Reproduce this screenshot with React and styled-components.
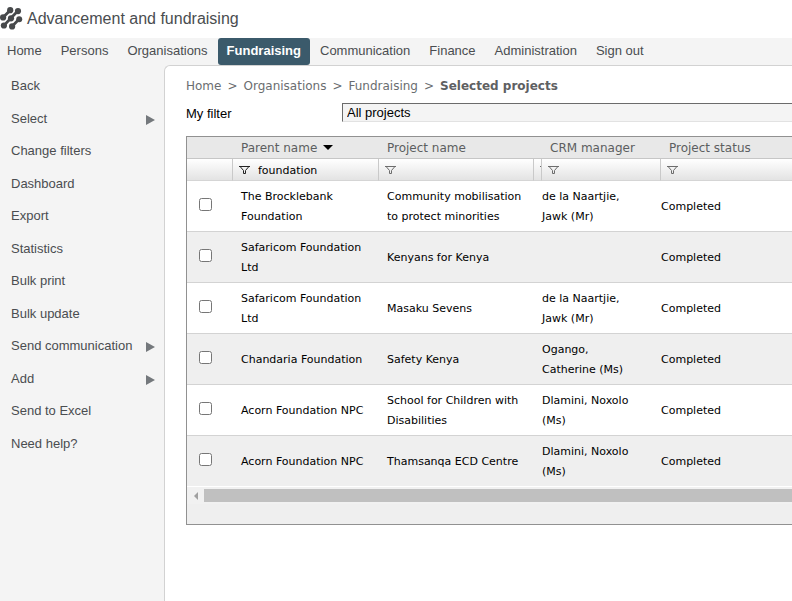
import React, { useState } from "react";
import styled, { createGlobalStyle } from "styled-components";

const arial = '"Liberation Sans", Arial, sans-serif';
const verdana = '"DejaVu Sans", Verdana, sans-serif';

const GlobalStyle = createGlobalStyle`
  * { box-sizing: border-box; }
  body { margin: 0; background: #fff; font-family: ${arial}; color: #4a4d50; }
`;

const Page = styled.div`
  min-height: 100vh;
  display: flex;
  flex-direction: column;
  overflow: hidden;
`;

const Header = styled.header`
  height: 38px;
  display: flex;
  align-items: center;
  gap: 4px;
`;

const Logo = styled.svg`
  width: 23px;
  height: 24px;
  flex: none;
`;

const Title = styled.h1`
  margin: 0;
  font-size: 16px;
  line-height: 20px;
  font-weight: 400;
  white-space: nowrap;
`;

const NavBar = styled.nav`
  display: flex;
  gap: 1px;
  height: 27px;
  background: #f4f4f4;
  white-space: nowrap;
`;

const NavLink = styled.a`
  padding: 0 9px;
  font-size: 13px;
  line-height: 25px;
  color: ${(p) => (p.$active ? "#fff" : "#4a4d50")};
  font-weight: ${(p) => (p.$active ? 700 : 400)};
  background: ${(p) => (p.$active ? "#3b5a6b" : "transparent")};
  border-radius: 3px;
  text-decoration: none;
  &:first-child { padding-left: 7px; }
`;

const Body = styled.div`
  flex: 1;
  display: grid;
  grid-template-columns: 164px minmax(0, 1fr);
  background: #f4f4f4;
`;

const Menu = styled.ul`
  list-style: none;
  margin: 0;
  padding: 5px 9px 0 11px;
`;

const MenuItem = styled.li`
  height: 32px;
  &:nth-child(odd) { height: 33px; }
`;

const MenuLink = styled.a`
  display: flex;
  align-items: center;
  justify-content: space-between;
  font-size: 13px;
  line-height: 32px;
  color: #4a4d50;
  text-decoration: none;
  white-space: nowrap;
`;

const MenuArrow = styled.svg`
  width: 9px;
  height: 10px;
  margin-top: 1px;
  fill: #74787c;
`;

const Main = styled.main`
  background: #fff;
  border: 1px solid #d2d2d2;
  border-width: 1px 0 0 1px;
  border-top-left-radius: 6px;
  padding: 10px 0 24px 21px;
`;

const Breadcrumbs = styled.nav`
  display: flex;
  gap: 6px;
  font-family: ${verdana};
  font-size: 12px;
  line-height: 20px;
  color: #6a6d70;
  white-space: nowrap;
`;

const Crumb = styled.a`
  color: inherit;
  text-decoration: none;
`;

const Current = styled.strong`
  color: #5e6062;
`;

const FilterRow = styled.div`
  display: grid;
  grid-template-columns: 156px minmax(0, 1fr);
  margin-top: 7px;
  color: #000;
`;

const FilterLabel = styled.label`
  font-size: 13px;
  line-height: 21px;
`;

const FilterSelect = styled.select`
  appearance: none;
  width: 100%;
  height: 19px;
  padding: 0 4px;
  border: 1px solid #e2e2e2;
  border-top-color: #6b6b6b;
  border-left-color: #6b6b6b;
  border-right: 0;
  border-radius: 0;
  background: #f4f4f4;
  color: #000;
  font-family: ${arial};
  font-size: 13px;
  line-height: 17px;
`;

const Grid = styled.section`
  margin-top: 12px;
  border: 1px solid #919191;
  border-right: 0;
  background: #efefef;
  overflow: hidden;
`;

const Table = styled.table`
  width: 100%;
  table-layout: fixed;
  border-collapse: separate;
  border-spacing: 0;
  font-family: ${verdana};
`;

const Col = styled.col`
  width: ${(p) => (p.$width ? `${p.$width}px` : "auto")};
`;

const HeadCell = styled.th`
  height: 22px;
  padding: 0 0 0 9px;
  background: #e8e8e8;
  border-bottom: 1px solid #c6c6c6;
  color: #5c5e60;
  font-size: 12px;
  line-height: 20px;
  font-weight: 400;
  text-align: left;
  white-space: nowrap;
`;

const SortButton = styled.button`
  display: flex;
  align-items: center;
  gap: 6px;
  padding: 0;
  border: 0;
  background: none;
  color: inherit;
  font: inherit;
`;

const FilterCell = styled.td`
  height: 22px;
  padding: 0 0 0 6px;
  background: linear-gradient(#fff, #e3e3e3);
  border-bottom: 1px solid #d5d5d5;
  border-left: ${(p) => (p.$first ? 0 : 1)}px solid #c9c9c9;
`;

const FilterBox = styled.div`
  display: flex;
  align-items: center;
  gap: 8px;
`;

const FunnelIcon = styled.svg`
  width: 11px;
  height: 10px;
  flex: none;
  fill: none;
  stroke: ${(p) => (p.$active ? "#222" : "#6c6c6c")};
`;

const FilterInput = styled.input`
  width: 100%;
  min-width: 0;
  height: 20px;
  padding: 2px 0 0;
  border: 0;
  outline: 0;
  background: transparent;
  color: #000;
  font-family: ${verdana};
  font-size: 11px;
`;

const ClippedFunnel = styled.span`
  display: block;
  width: 1px;
  height: 1px;
  margin-bottom: 7px;
  background: #6c6c6c;
`;

const Row = styled.tr`
  background: #fff;
  &:nth-child(even) { background: #efefef; }
`;

const Cell = styled.td`
  height: 51px;
  padding: 2px 8px 0 9px;
  border-bottom: 1px solid #d3d3d3;
  color: #000;
  font-size: 11px;
  line-height: 20px;
  vertical-align: middle;
  ${Row}:last-child & { border-bottom-color: #fff; }
`;

const FlushCell = styled(Cell)`
  padding-left: 1px;
  padding-right: 16px;
`;

const CheckBox = styled.input`
  display: block;
  width: 13px;
  height: 13px;
  margin: 0 0 5px 3px;
`;

const ScrollBar = styled.div`
  display: flex;
  align-items: center;
  height: 17px;
  background: #f1f1f1;
`;

const ScrollButton = styled.button`
  display: flex;
  align-items: center;
  justify-content: center;
  width: 17px;
  height: 17px;
  padding: 0;
  border: 0;
  background: none;
`;

const ScrollThumb = styled.div`
  flex: 1;
  height: 13px;
  background: #c0c0c0;
`;

const GridFooter = styled.div`
  height: 20px;
`;

const navItems = ["Home", "Persons", "Organisations", "Fundraising", "Communication", "Finance", "Administration", "Sign out"];

const menuItems = [
  ["Back"], ["Select", true], ["Change filters"], ["Dashboard"], ["Export"], ["Statistics"],
  ["Bulk print"], ["Bulk update"], ["Send communication", true], ["Add", true], ["Send to Excel"], ["Need help?"],
];

const projects = [
  ["The Brocklebank Foundation", "Community mobilisation to protect minorities", "de la Naartjie, Jawk (Mr)"],
  ["Safaricom Foundation Ltd", "Kenyans for Kenya", ""],
  ["Safaricom Foundation Ltd", "Masaku Sevens", "de la Naartjie, Jawk (Mr)"],
  ["Chandaria Foundation", "Safety Kenya", "Ogango, Catherine (Ms)"],
  ["Acorn Foundation NPC", "School for Children with Disabilities", "Dlamini, Noxolo (Ms)"],
  ["Acorn Foundation NPC", "Thamsanqa ECD Centre", "Dlamini, Noxolo (Ms)"],
];

function Funnel({ active }) {
  return (
    <FunnelIcon $active={active} viewBox="0 0 11 10" aria-hidden="true">
      <path d="M0 1.5H11M1.5 2L4.5 5.5V8.5H6.5V5.5L9.5 2" />
    </FunnelIcon>
  );
}

function ColumnFilter({ label, initial = "" }) {
  const [value, setValue] = useState(initial);
  return (
    <FilterCell>
      <FilterBox>
        <Funnel active={value !== ""} />
        <FilterInput aria-label={`Filter ${label}`} value={value} onChange={(e) => setValue(e.target.value)} />
      </FilterBox>
    </FilterCell>
  );
}

function BrandMark() {
  return (
    <Logo viewBox="0 0 23 24" aria-hidden="true">
      <g stroke="#47494b" strokeWidth="2.8" strokeLinecap="round" fill="none">
        <path d="M3.2 10.2L10.2 3.2M4 18.4L11 11L18 3.8M12.2 19.2L19.2 12" />
      </g>
      <g fill="#47494b">
        <circle cx="10.2" cy="3.2" r="3.1" />
        <circle cx="18" cy="4.1" r="3.1" />
        <circle cx="3.1" cy="10.4" r="3.1" />
        <circle cx="11" cy="11.3" r="3.1" />
        <circle cx="19.2" cy="12.2" r="3" />
        <circle cx="3.9" cy="18.5" r="3.1" />
        <circle cx="12.1" cy="19.4" r="3.1" />
      </g>
    </Logo>
  );
}

export default function App() {
  return (
    <Page>
      <GlobalStyle />
      <Header>
        <BrandMark />
        <Title>Advancement and fundraising</Title>
      </Header>
      <NavBar aria-label="Main">
        {navItems.map((item) => (
          <NavLink key={item} href="#" $active={item === "Fundraising"}>{item}</NavLink>
        ))}
      </NavBar>
      <Body>
        <Menu>
          {menuItems.map(([label, sub]) => (
            <MenuItem key={label}>
              <MenuLink href="#">
                {label}
                {sub && <MenuArrow viewBox="0 0 9 10" aria-hidden="true"><path d="M0 0L9 5L0 10Z" /></MenuArrow>}
              </MenuLink>
            </MenuItem>
          ))}
        </Menu>
        <Main>
          <Breadcrumbs aria-label="Breadcrumb">
            <Crumb href="#">Home</Crumb>
            <span>&gt;</span>
            <Crumb href="#">Organisations</Crumb>
            <span>&gt;</span>
            <Crumb href="#">Fundraising</Crumb>
            <span>&gt;</span>
            <Current>Selected projects</Current>
          </Breadcrumbs>
          <FilterRow>
            <FilterLabel htmlFor="my-filter">My filter</FilterLabel>
            <FilterSelect id="my-filter"><option>All projects</option></FilterSelect>
          </FilterRow>
          <Grid>
            <Table>
              <colgroup>
                <Col $width={45} />
                <Col $width={146} />
                <Col $width={155} />
                <Col $width={8} />
                <Col $width={119} />
                <Col />
              </colgroup>
              <thead>
                <tr>
                  <HeadCell />
                  <HeadCell>
                    <SortButton>
                      Parent name
                      <svg width="10" height="5" viewBox="0 0 10 5" aria-hidden="true"><path d="M0 0H10L5 5Z" fill="#000" /></svg>
                    </SortButton>
                  </HeadCell>
                  <HeadCell colSpan={2}>Project name</HeadCell>
                  <HeadCell>CRM manager</HeadCell>
                  <HeadCell>Project status</HeadCell>
                </tr>
                <tr>
                  <FilterCell $first />
                  <ColumnFilter label="parent name" initial="foundation" />
                  <ColumnFilter label="project name" />
                  <FilterCell><ClippedFunnel /></FilterCell>
                  <ColumnFilter label="CRM manager" />
                  <ColumnFilter label="project status" />
                </tr>
              </thead>
              <tbody>
                {projects.map(([parent, name, manager], i) => (
                  <Row key={name}>
                    <Cell><CheckBox type="checkbox" aria-label={`Select ${name}`} id={`project-${i}`} /></Cell>
                    <Cell>{parent}</Cell>
                    <Cell colSpan={2}>{name}</Cell>
                    <FlushCell>{manager}</FlushCell>
                    <FlushCell>Completed</FlushCell>
                  </Row>
                ))}
              </tbody>
            </Table>
            <ScrollBar>
              <ScrollButton aria-label="Scroll left">
                <svg width="4" height="8" viewBox="0 0 4 8" aria-hidden="true"><path d="M4 0V8L0 4Z" fill="#a0a0a0" /></svg>
              </ScrollButton>
              <ScrollThumb />
            </ScrollBar>
            <GridFooter />
          </Grid>
        </Main>
      </Body>
    </Page>
  );
}
